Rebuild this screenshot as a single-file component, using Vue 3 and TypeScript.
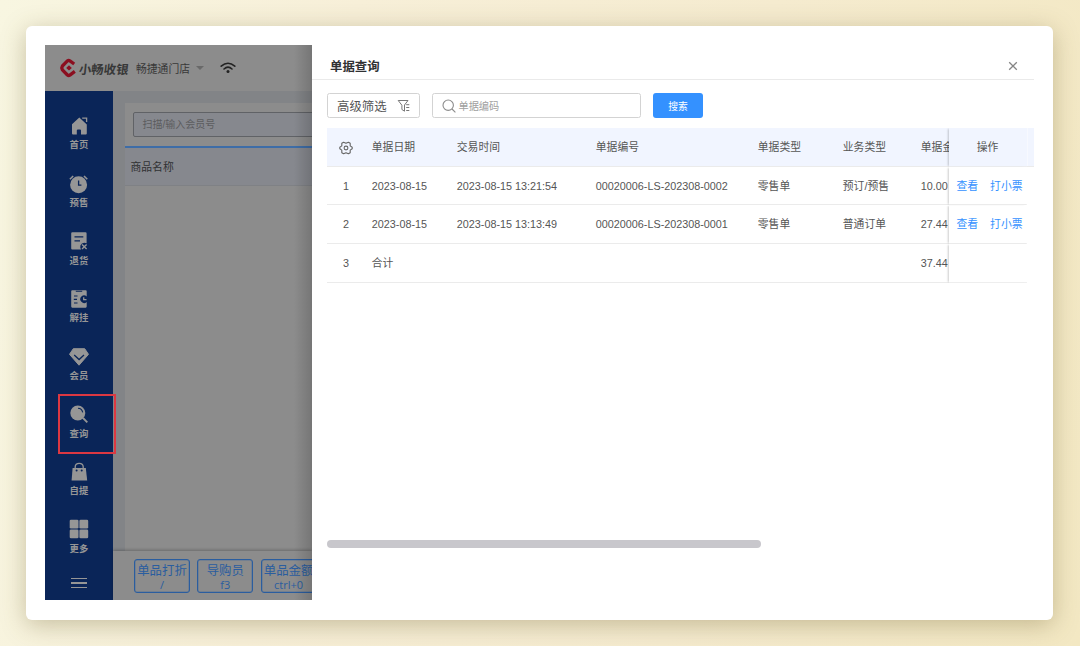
<script setup lang="ts">
interface NavItem { icon: string; label: string }
interface Row { no: number; date: string; time: string; code: string; type: string; biz: string; amount: string; actions: boolean }

const nav: NavItem[] = [
  { icon: 'home', label: '首页' },
  { icon: 'clock', label: '预售' },
  { icon: 'return', label: '退货' },
  { icon: 'hold', label: '解挂' },
  { icon: 'member', label: '会员' },
  { icon: 'query', label: '查询' },
  { icon: 'bag', label: '自提' },
  { icon: 'more', label: '更多' },
]

const shortcuts = [
  { name: '单品打折', key: '/' },
  { name: '导购员', key: 'f3' },
  { name: '单品金额', key: 'ctrl+0' },
]

const rows: Row[] = [
  { no: 1, date: '2023-08-15', time: '2023-08-15 13:21:54', code: '00020006-LS-202308-0002', type: '零售单', biz: '预订/预售', amount: '10.00', actions: true },
  { no: 2, date: '2023-08-15', time: '2023-08-15 13:13:49', code: '00020006-LS-202308-0001', type: '零售单', biz: '普通订单', amount: '27.44', actions: true },
  { no: 3, date: '合计', time: '', code: '', type: '', biz: '', amount: '37.44', actions: false },
]
</script>

<template>
  <div class="page">
    <div class="card">
      <div class="app">
        <section class="pos">
          <header class="top">
            <svg class="logo" viewBox="0 0 18 20" width="18" height="20">
              <path d="M15.2 6 10.9 2.9Q9.6 2.1 8.4 2.9L3.4 8Q2.2 9.9 3.4 11.8L8.4 17Q9.6 17.9 10.9 17.1L15.8 13.4" fill="none" stroke="#8b0f20" stroke-width="3.3" stroke-linejoin="round" />
              <path d="M7.2 9.9 10 7.3 12.8 9.9 10 12.6Z" fill="#8b0f20" />
            </svg>
            <span class="brand">小畅收银</span>
            <span class="store">畅捷通门店</span>
            <i class="caret"></i>
            <svg class="wifi" viewBox="0 0 16 12" width="16" height="12">
              <g fill="none" stroke="#222" stroke-width="1.6" stroke-linecap="round">
                <path d="M1.2 4.2Q8-1.7 14.8 4.2" />
                <path d="M4 7Q8 3.4 12 7" />
              </g>
              <circle cx="8" cy="9.6" r="1.5" fill="#222" />
            </svg>
          </header>
          <div class="main">
            <nav class="side">
              <div v-for="n in nav" :key="n.icon" class="nav-item" :class="{ marked: n.icon === 'query' }">
                <svg viewBox="0 0 20 20" width="20" height="20" fill="#969696">
                  <template v-if="n.icon === 'home'">
                    <path d="M10.3 1.4 3 8.2V17.4Q3 18.4 4 18.4H7.8V14.4Q7.8 13.4 9 13.4H11Q12 13.4 12 14.4V18.4H16.8Q17.8 18.4 17.8 17.4V8.4Z" />
                    <path d="M13.2 2.2H17.6V6" fill="none" stroke="#969696" stroke-width="1.3" />
                  </template>
                  <template v-else-if="n.icon === 'clock'">
                    <circle cx="9.6" cy="10.7" r="8.5" />
                    <path d="M.9 5.2 4.2 2M15 2l3.3 3.2" stroke="#969696" stroke-width="1.6" />
                    <path d="M9.6 6.5V11.1H12.4" fill="none" stroke="#0a2558" stroke-width="1.3" />
                  </template>
                  <template v-else-if="n.icon === 'return'">
                    <path d="M3.3 1.3H16.5Q17.6 1.3 17.6 2.4V12.2Q13 10.7 11.4 14.4 10.8 16.8 12.3 18.6H3.3Q2.2 18.6 2.2 17.5V2.4Q2.2 1.3 3.3 1.3Z" />
                    <path d="M5.5 5.8H14.3M5.5 9.8H11" stroke="#0a2558" stroke-width="1.2" />
                    <path d="m13 13.4 4.6 4.5m0-4.5L13 17.9" stroke="#969696" stroke-width="1.4" />
                  </template>
                  <template v-else-if="n.icon === 'hold'">
                    <path d="M3.2 1.2H16.7Q17.7 1.2 17.7 2.2V7.4A3.8 3.8 0 1 0 17.7 13V17.6Q17.7 18.7 16.7 18.7H3.2Q2.2 18.7 2.2 17.6V2.2Q2.2 1.2 3.2 1.2Z" />
                    <path d="M6.8 2.3H13.2M5 7H8.5M4.8 10.4H8M5 14H8.5" stroke="#0a2558" stroke-width="1.1" />
                    <path d="M14.7 8.3V10.6H17.5" fill="none" stroke="#969696" stroke-width="1.3" />
                  </template>
                  <template v-else-if="n.icon === 'member'">
                    <path d="M4.3 1.7H15.7L19.5 7.3 10 18.2.5 7.3Z" stroke="#969696" stroke-linejoin="round" />
                    <path d="m5.2 8 4.9 4.5L15 8" fill="none" stroke="#0a2558" stroke-width="1.3" />
                  </template>
                  <template v-else-if="n.icon === 'query'">
                    <circle cx="8.8" cy="9" r="7.5" />
                    <path d="m14 14 4.3 4.4" stroke="#969696" stroke-width="1.8" />
                    <path d="M9 4.2Q13 4.4 13.7 8.4" fill="none" stroke="#0a2558" stroke-width="1.1" />
                  </template>
                  <template v-else-if="n.icon === 'bag'">
                    <path d="M3.6 6H16.8L18.2 18.6H2.6Z" />
                    <path d="M6.2 7V4.9Q6.4 1.4 10.2 1.4T14.2 4.9V7" fill="none" stroke="#969696" stroke-width="1.3" />
                    <circle cx="7.6" cy="8.6" r="1" fill="#0a2558" /><circle cx="12.7" cy="8.6" r="1" fill="#0a2558" />
                  </template>
                  <template v-else>
                    <rect x=".7" y=".8" width="8.8" height="8.8" rx="1.3" /><rect x="10.4" y=".8" width="8.8" height="8.8" rx="1.3" />
                    <rect x=".7" y="10.5" width="8.8" height="8.8" rx="1.3" /><rect x="10.4" y="10.5" width="8.8" height="8.8" rx="1.3" />
                  </template>
                </svg>
                <span>{{ n.label }}</span>
              </div>
              <div class="burger"><i></i><i></i><i></i></div>
            </nav>
            <div class="work">
              <div class="panel">
                <div class="scan"><div class="scan-input">扫描/输入会员号</div></div>
                <div class="goods-head">商品名称</div>
              </div>
              <footer class="keys">
                <div v-for="s in shortcuts" :key="s.name" class="key">
                  <span class="key-name">{{ s.name }}</span>
                  <span class="key-code">{{ s.key }}</span>
                </div>
              </footer>
            </div>
          </div>
        </section>

        <section class="drawer">
          <header class="drawer-head">
            <h1>单据查询</h1>
            <svg viewBox="0 0 10 10" width="10" height="10"><path d="m1.2 1.2 7.6 7.6m0-7.6L1.2 8.8" stroke="#858585" stroke-width="1.3" /></svg>
          </header>
          <div class="tools">
            <div class="filter">
              <span>高级筛选</span>
              <svg viewBox="0 0 14 14" width="14" height="14" fill="none" stroke="#777" stroke-width="1">
                <path d="M1.2 1.5H11L7.5 6V12.2L4.9 10.5V6.2Z" stroke-linejoin="round" />
                <path d="M9.2 5.7H12.3M9.2 8.5H12.3M9.2 11.5H12.3" />
              </svg>
            </div>
            <div class="search">
              <svg viewBox="0 0 14 14" width="14" height="14" fill="none" stroke="#8c8c8c" stroke-width="1.1">
                <circle cx="6.2" cy="6.2" r="5.2" /><path d="m10 10 3.4 3.3" />
              </svg>
              <span>单据编码</span>
            </div>
            <button class="go">搜索</button>
          </div>
          <div class="table">
            <div class="tr th">
              <div class="cells">
                <span class="idx">
                  <svg viewBox="0 0 14 14" width="14" height="14" fill="none" stroke="#666" stroke-width="1.1">
                    <path d="M4.6 1.2 7 2.3 9.4 1.2 11.2 2.3 11.2 4.9 13.2 6.2V7.8L11.2 9.1 11.2 11.7 9.4 12.8 7 11.7 4.6 12.8 2.8 11.7 2.8 9.1.8 7.8V6.2L2.8 4.9 2.8 2.3Z" stroke-linejoin="round" />
                    <circle cx="7" cy="7" r="1.9" />
                  </svg>
                </span>
                <span>单据日期</span><span>交易时间</span><span>单据编号</span><span>单据类型</span><span>业务类型</span><span>单据金额</span>
              </div>
              <div class="fixed">操作</div>
              <div class="gutter"></div>
            </div>
            <div v-for="r in rows" :key="r.no" class="tr">
              <div class="cells">
                <span class="idx">{{ r.no }}</span>
                <span>{{ r.date }}</span><span>{{ r.time }}</span><span>{{ r.code }}</span><span>{{ r.type }}</span><span>{{ r.biz }}</span><span>{{ r.amount }}</span>
              </div>
              <div class="fixed links">
                <template v-if="r.actions"><a>查看</a><a>打小票</a></template>
              </div>
            </div>
          </div>
          <div class="scrollbar"></div>
        </section>
      </div>
    </div>
  </div>
</template>

<style>
body { margin: 0; }
</style>

<style scoped>
*, *::after { box-sizing: border-box; }
.page {
  height: 646px;
  padding: 25.5px 27px 26px 26px;
  overflow: hidden;
  background: linear-gradient(100deg, #f8f6e1 0%, #f7efd8 30%, #f5ebcf 65%, #f3e8c3 100%);
  font-family: "Liberation Sans", "Noto Sans CJK SC", sans-serif;
  font-size: 10.8px;
  color: #555;
}
.card {
  height: 594.5px;
  padding: 19.5px 19px;
  background: #fff;
  border-radius: 6px;
  box-shadow: 0 5px 24px rgba(105, 90, 40, .34);
}
.app { display: flex; height: 555px; }

.pos {
  position: relative;
  width: 267px;
  flex: none;
  display: flex;
  flex-direction: column;
  overflow: hidden;
  background: #8c8c8c;
}
.pos::after {
  content: "";
  position: absolute;
  inset: 0 0 0 auto;
  width: 18px;
  background: linear-gradient(90deg, rgba(0, 0, 0, 0), rgba(0, 0, 0, .16));
}
.top {
  height: 46px;
  flex: none;
  display: flex;
  align-items: center;
  padding-left: 14px;
  white-space: nowrap;
}
.logo { flex: none; }
.brand { margin-left: 2px; width: 50px; font-size: 12.4px; font-weight: 700; color: #383838; transform: skewX(-6deg); position: relative; top: 1px; }
.store { margin-left: 7px; color: #383838; }
.caret { margin-left: 6px; border: 4.5px solid transparent; border-top-color: #696969; border-bottom: 0; }
.wifi { margin-left: 16px; }

.main { flex: 1; display: flex; min-height: 0; }
.side { width: 68px; flex: none; padding-top: 25px; background: #0a2558; }
.nav-item {
  position: relative;
  height: 57.65px;
  display: flex;
  flex-direction: column;
  align-items: center;
  font-size: 9.4px;
  line-height: 14px;
  font-weight: 700;
  color: #969696;
}
.nav-item span { margin-top: 2.4px; }
.nav-item.marked::after {
  content: "";
  position: absolute;
  left: 12.5px;
  top: -10px;
  width: 58px;
  height: 59.5px;
  border: 2px solid #dc3842;
  z-index: 2;
}
.burger { width: 16px; margin: 0 auto; padding-top: .5px; display: flex; flex-direction: column; gap: 3.6px; }
.burger i { height: 1.2px; background: #969696; }

.work { flex: 1; min-width: 0; display: flex; flex-direction: column; background: #828487; }
.panel { flex: 1; margin: 12px 0 0 11.5px; background: #8c8c8c; }
.scan { height: 44.5px; padding: 9px 0 0 8px; border-bottom: 2px solid #3e6da7; }
.scan-input {
  width: 220px;
  height: 25px;
  padding-left: 9px;
  border: 1px solid #606266;
  border-radius: 2px;
  background: #86888e;
  font-size: 10px;
  line-height: 23px;
  color: #5c5c5e;
}
.goods-head { height: 38.5px; padding-left: 6px; line-height: 39px; background: #86888e; border-bottom: 1px solid #7f8185; color: #303133; }
.keys {
  height: 49px;
  flex: none;
  display: flex;
  gap: 7.3px;
  padding: 7.5px 0 0 21px;
  background: #8c8c8c;
  box-shadow: 0 -1px 3px rgba(0, 0, 0, .25);
}
.key {
  width: 56px;
  height: 34.5px;
  flex: none;
  display: flex;
  flex-direction: column;
  align-items: center;
  border: 1px solid #2a5d9f;
  box-shadow: inset 0 0 0 .5px rgba(42, 93, 159, .5);
  border-radius: 3px;
  color: #2a5d9f;
  white-space: nowrap;
}
.key-name { font-size: 12.4px; line-height: 14px; margin-top: 4px; }
.key-code { font-family: "Open Sans", "Noto Sans", sans-serif; font-size: 11px; line-height: 14px; }

.drawer { flex: 1; min-width: 0; background: #fff; }
.drawer-head {
  height: 35px;
  padding: 7.5px 16.5px 0 18px;
  display: flex;
  align-items: center;
  justify-content: space-between;
  border-bottom: 1px solid #eaeaea;
}
h1 { margin: 0; font-size: 12.4px; font-weight: 700; color: #303133; }
.tools { display: flex; padding: 13px 0 0 15px; height: 48px; }
.filter, .search { height: 25px; display: flex; align-items: center; border: 1px solid #d3d3d3; border-radius: 2.5px; }
.filter { width: 93px; padding-left: 9px; font-size: 12.4px; color: #555; }
.filter svg { margin-left: 10px; }
.search { width: 209px; margin-left: 12px; padding-left: 8.5px; font-size: 10.2px; color: #a0a0a0; }
.search span { margin-left: 3px; }
.go { width: 50px; height: 25px; margin-left: 12px; padding: 0; border: 0; border-radius: 3px; background: #3491ff; color: #fff; font: 400 9.8px "Liberation Sans", "Noto Sans CJK SC", sans-serif; }

.table { margin-left: 15px; }
.tr { display: flex; width: 699.5px; height: 38.7px; border-bottom: 1px solid #ebebeb; line-height: 39px; white-space: nowrap; }
.th { width: 707px; background: #f1f5ff; }
.cells {
  width: 621.5px;
  flex: none;
  overflow: hidden;
  display: grid;
  grid-template-columns: 38px 85px 139px 162px 85px 78px 80px;
}
.cells span { padding-left: 6.8px; }
.cells .idx { padding: 0; display: flex; align-items: center; justify-content: center; }
.fixed {
  width: 78px;
  height: 38.7px;
  flex: none;
  display: flex;
  justify-content: center;
  gap: 12px;
  background: #fff;
  box-shadow: -2px 0 2px -1px rgba(0, 0, 0, .2);
  clip-path: inset(0 0 0 -5px);
  border-bottom: 1px solid #ebebeb;
}
.links { padding-left: 4px; }
.th .fixed { background: #f1f5ff; }
.gutter { flex: 1; border-left: 1px solid #f7f9ff; }
.fixed a { color: #3491ff; }
.scrollbar { width: 434px; height: 8px; margin: 257px 0 0 15px; border-radius: 4px; background: #c8c7cc; }
</style>
